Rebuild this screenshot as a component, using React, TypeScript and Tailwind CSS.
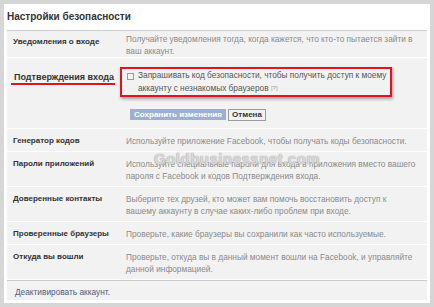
const rows = [
  {
    label: "Генератор кодов",
    text: "Используйте приложение Facebook, чтобы получать коды безопасности.",
  },
  {
    label: "Пароли приложений",
    text: "Используйте специальные пароли для входа в приложения вместо вашего пароля с Facebook и кодов Подтверждения входа.",
  },
  {
    label: "Доверенные контакты",
    text: "Выберите тех друзей, кто может вам помочь восстановить доступ к вашему аккаунту в случае каких-либо проблем при входе.",
  },
  {
    label: "Проверенные браузеры",
    text: "Проверьте, какие браузеры вы сохранили как часто используемые.",
  },
  {
    label: "Откуда вы вошли",
    text: "Проверьте, откуда вы в данный момент вошли на Facebook, и управляйте данной информацией.",
  },
];

const Row = ({ label, text }: { label: string; text: string }) => (
  <div className="flex border-b border-white pt-[6px] pb-[4px]">
    <div className="w-[119px] shrink-0 whitespace-nowrap pl-[6px] text-[8px] leading-[12px] font-bold text-[#333]">
      {label}
    </div>
    <div className="w-[290px] text-[8.3px] leading-[12px] text-[#8a8a8a]">{text}</div>
  </div>
);

export default function App() {
  return (
    <div
      className="w-[434px] h-[307px] overflow-hidden bg-[#d6d6d6] p-[4px]"
      style={{ fontFamily: '"Liberation Sans", Arial, sans-serif' }}
    >
      <div className="relative flex h-full flex-col bg-white px-[3px] pb-[3px]">
        <div className="h-[27px] shrink-0 border-b border-[#c9c9c9] pt-[5px] text-[10px] font-bold text-[#333]">
          Настройки безопасности
        </div>

        <div className="flex-1 bg-[#f2f2f2]">
          <div className="flex border-b border-white pt-[2px]">
            <div className="w-[119px] shrink-0 whitespace-nowrap pl-[6px] pt-[3px] text-[8px] leading-[12px] font-bold text-[#333]">
              Уведомления о входе
            </div>
            <div className="w-[292px] text-[8.3px] leading-[12px] text-[#8a8a8a]">
              Получайте уведомления тогда, когда кажется, что кто-то пытается зайти в ваш аккаунт.
            </div>
          </div>

          <div className="border-b border-white pt-[9px] pb-[7px]">
            <div className="flex">
              <div className="w-[113px] shrink-0 pl-[7px] pt-[4px] text-[9px] leading-[12px]">
                <span className="-ml-[3px] whitespace-nowrap border-b-2 border-[#e0141c] pb-[1px] pl-[3px] pr-[1px] font-bold text-[#333]">
                  Подтверждения входа
                </span>
              </div>
              <div className="flex h-[30px] w-[272px] gap-[4px] border-2 border-[#e3131b] pl-[5px] shadow-[1px_2px_3px_rgba(0,0,0,0.35)]">
                <div className="mt-[4px] h-[7px] w-[7px] shrink-0 border border-[#9a9a9a] bg-[#f4f4f4]" />
                <div className="text-[8.3px] leading-[12.5px] text-[#555]">
                  Запрашивать код безопасности, чтобы получить доступ к моему аккаунту с незнакомых браузеров{" "}
                  <span className="inline-block align-middle text-[6px] leading-none text-[#999]">[?]</span>
                </div>
              </div>
            </div>
            <div className="mt-[12px] flex items-start gap-[2px] pl-[123px]">
              <button className="h-[11px] w-[96px] bg-[#9eb0cf] text-[8px] leading-[11px] font-bold text-white">
                Сохранить изменения
              </button>
              <button className="h-[12px] w-[38px] border border-[#9a9a9a] bg-[#f2f2f2] text-[8px] leading-[10px] font-bold text-[#333]">
                Отмена
              </button>
            </div>
          </div>

          {rows.map((r) => (
            <Row key={r.label} label={r.label} text={r.text} />
          ))}

          <div className="border-t border-[#c9c9c9] pl-[8px] pt-[5px] text-[8.3px] leading-[12px] text-[#4a5b84]">
            Деактивировать аккаунт.
          </div>
        </div>

        <div
          className="pointer-events-none absolute left-[150px] top-[144px] text-[15px] font-bold tracking-[0.5px] text-white/60"
          style={{ textShadow: "0 0 1px #a0a0a0, 0 0 1px #a0a0a0" }}
        >
          Goldbusinessnet.com
        </div>
      </div>
    </div>
  );
}
